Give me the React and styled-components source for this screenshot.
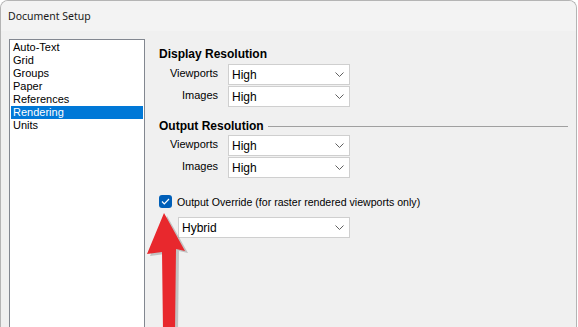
import styled, { createGlobalStyle } from "styled-components";

const GlobalStyles = createGlobalStyle`
  html, body {
    margin: 0;
    padding: 0;
    background: #ffffff;
    overflow: hidden;
    font-family: "Liberation Sans", Arial, sans-serif;
    color: #000;
  }
  *, *:before, *:after {
    box-sizing: border-box;
  }
`;

const Window = styled.div`
  position: relative;
  width: 577px;
  height: 100vh;
  border: 1px solid #b4b4b4;
  border-bottom: none;
  border-radius: 8px 8px 0 0;
  overflow: hidden;
  background: #f0f0f0;
  display: flex;
  flex-direction: column;
`;

const TitleBar = styled.div`
  height: 30px;
  flex: none;
  display: flex;
  align-items: center;
  padding-left: 7px;
  background: #f3f3f3;
  font-family: "Noto Sans", "Liberation Sans", sans-serif;
  font-size: 10.5px;
  color: #1a1a1a;
`;

const Body = styled.div`
  flex: 1;
  min-height: 0;
  display: flex;
  padding: 8px 0 0 8px;
  background: #f0f0f0;
`;

const ListBox = styled.div`
  width: 136px;
  flex: none;
  border: 1px solid #828790;
  border-bottom: none;
  background: #fff;
  padding: 1px;
`;

const ListItem = styled.div`
  height: 13px;
  line-height: 13px;
  padding-left: 2px;
  font-size: 11px;
  background: ${({ $selected }) => ($selected ? "#0078d7" : "transparent")};
  color: ${({ $selected }) => ($selected ? "#fff" : "#000")};
`;

const Panel = styled.div`
  flex: 1;
  display: flex;
  flex-direction: column;
  padding: 8px 8px 0 14px;
`;

const SectionHeader = styled.div`
  display: flex;
  align-items: center;
  gap: 4px;
  height: 14px;
  font-size: 12px;
  font-weight: bold;
  margin-top: ${({ $top }) => $top}px;
  margin-bottom: ${({ $bottom }) => $bottom}px;
`;

const Rule = styled.div`
  flex: 1;
  height: 1px;
  background: #a0a0a0;
  margin-top: 1px;
`;

const Rows = styled.div`
  display: flex;
  flex-direction: column;
  gap: 1px;
`;

const Row = styled.div`
  display: flex;
  align-items: flex-start;
  gap: 10px;
`;

const Label = styled.div`
  width: 59px;
  text-align: right;
  font-size: 11px;
  padding-top: 3px;
  color: #000;
`;

const Select = styled.div`
  width: ${({ $w }) => $w}px;
  height: 21px;
  display: flex;
  align-items: center;
  justify-content: space-between;
  padding: 0 5px 0 3px;
  background: #fff;
  border: 1px solid #cfcfcf;
  font-size: 12px;
  color: #000;
`;

const CheckRow = styled.div`
  display: flex;
  align-items: center;
  gap: 5px;
  margin-top: 17px;
  font-size: 10.6px;
`;

const CheckBox = styled.div`
  width: 13px;
  height: 13px;
  border-radius: 3px;
  background: #005fb8;
  display: flex;
  align-items: center;
  justify-content: center;
`;

const Indent = styled.div`
  margin: 9px 0 0 19px;
`;

const ArrowOverlay = styled.svg`
  position: absolute;
  left: 0;
  top: 0;
  pointer-events: none;
`;

const Chevron = () => (
  <svg width="9" height="5" viewBox="0 0 9 5">
    <path d="M0.5 0.5 L4.5 4.5 L8.5 0.5" fill="none" stroke="#606060" strokeWidth="1" />
  </svg>
);

const Dropdown = ({ value, width = 122 }) => (
  <Select $w={width}>
    <span>{value}</span>
    <Chevron />
  </Select>
);

const items = ["Auto-Text", "Grid", "Groups", "Paper", "References", "Rendering", "Units"];

export default function App() {
  return (
    <>
      <GlobalStyles />
      <Window>
        <TitleBar>Document Setup</TitleBar>
        <Body>
          <ListBox>
            {items.map((item) => (
              <ListItem key={item} $selected={item === "Rendering"}>
                {item}
              </ListItem>
            ))}
          </ListBox>
          <Panel>
            <SectionHeader $top={0} $bottom={3}>Display Resolution</SectionHeader>
            <Rows>
              <Row>
                <Label>Viewports</Label>
                <Dropdown value="High" />
              </Row>
              <Row>
                <Label>Images</Label>
                <Dropdown value="High" />
              </Row>
            </Rows>
            <SectionHeader $top={12} $bottom={2}>
              Output Resolution
              <Rule />
            </SectionHeader>
            <Rows>
              <Row>
                <Label>Viewports</Label>
                <Dropdown value="High" />
              </Row>
              <Row>
                <Label>Images</Label>
                <Dropdown value="High" />
              </Row>
            </Rows>
            <CheckRow>
              <CheckBox>
                <svg width="9" height="7" viewBox="0 0 9 7">
                  <path d="M1 3.5 L3.3 5.8 L8 1" fill="none" stroke="#fff" strokeWidth="1.2" />
                </svg>
              </CheckBox>
              Output Override (for raster rendered viewports only)
            </CheckRow>
            <Indent>
              <Dropdown value="Hybrid" width={172} />
            </Indent>
          </Panel>
        </Body>
        <ArrowOverlay width="578" height="327" viewBox="0 0 578 327">
          <polygon
            points="166,215 187,252 178,250 177,330 165,330 164,253 149,255"
            fill="#8a8a8a"
            opacity="0.45"
          />
          <polygon
            points="163,212 184,250 175,248 174,330 162,330 161,251 146,253"
            fill="#e8282d"
          />
        </ArrowOverlay>
      </Window>
    </>
  );
}
